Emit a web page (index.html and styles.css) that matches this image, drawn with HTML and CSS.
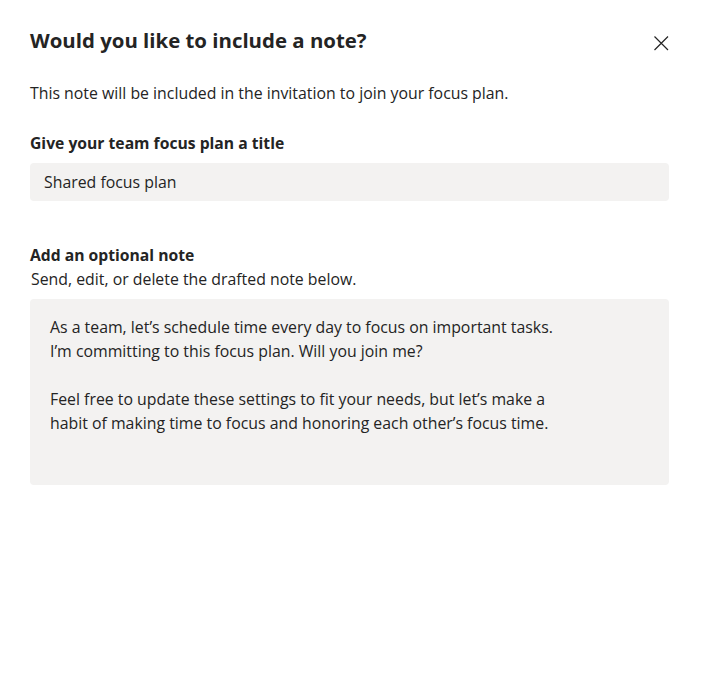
FILE: index.html
```html
<!DOCTYPE html>
<html lang="en">
<head>
<meta charset="utf-8">
<title>Would you like to include a note?</title>
<link rel="stylesheet" href="styles.css">
</head>
<body>
<div class="dialog">
  <div class="header">
    <h1 class="title">Would you like to include a note?</h1>
    <button class="close" aria-label="Close">
      <svg width="16" height="16" viewBox="0 0 16 16"><path d="M1.5 1.5 L15 15 M15 1.5 L1.5 15" stroke="#242424" stroke-width="1.2" fill="none"/></svg>
    </button>
  </div>
  <p class="desc">This note will be included in the invitation to join your focus plan.</p>
  <label class="label">Give your team focus plan a title</label>
  <div class="input">Shared focus plan</div>
  <div class="label label-note">Add an optional note</div>
  <div class="hint">Send, edit, or delete the drafted note below.</div>
  <div class="note">
    <p>As a team, let’s schedule time every day to focus on important tasks.<br>I’m committing to this focus plan. Will you join me?</p>
    <p>Feel free to update these settings to fit your needs, but let’s make a<br>habit of making time to focus and honoring each other’s focus time.</p>
  </div>
</div>
</body>
</html>
```

FILE: styles.css
```css
html, body {
  margin: 0;
  padding: 0;
  background: #ffffff;
}
body {
  font-family: "Open Sans", "Segoe UI", sans-serif;
  color: #242424;
  font-size: 15.85px;
}
.dialog {
  padding: 26px 34px 0 30px;
}
.header {
  display: flex;
  justify-content: space-between;
  align-items: flex-start;
}
.title {
  margin: 0;
  font-size: 20.4px;
  line-height: 28px;
  font-weight: 700;
}
.close {
  background: none;
  border: 0;
  padding: 0;
  margin: 9px 0 0 0;
  width: 16px;
  height: 16px;
  display: block;
}
.close svg { display: block; }
.desc {
  margin: 28px 0 0 0;
  line-height: 22px;
}
.label {
  display: block;
  margin-top: 28px;
  line-height: 22px;
  font-weight: 700;
  font-size: 15.7px;
}
.input {
  margin-top: 9px;
  height: 38px;
  box-sizing: border-box;
  padding: 0 14px;
  line-height: 38px;
  background: #f3f2f1;
  border-radius: 4px;
}
.label-note {
  margin-top: 43px;
}
.hint {
  line-height: 22px;
  padding: 2px 0 0 1px;
}
.note {
  margin-top: 9px;
  height: 186px;
  box-sizing: border-box;
  padding: 16px 20px;
  background: #f3f2f1;
  border-radius: 4px;
  line-height: 24px;
}
.note p {
  margin: 0 0 24px 0;
}
```
